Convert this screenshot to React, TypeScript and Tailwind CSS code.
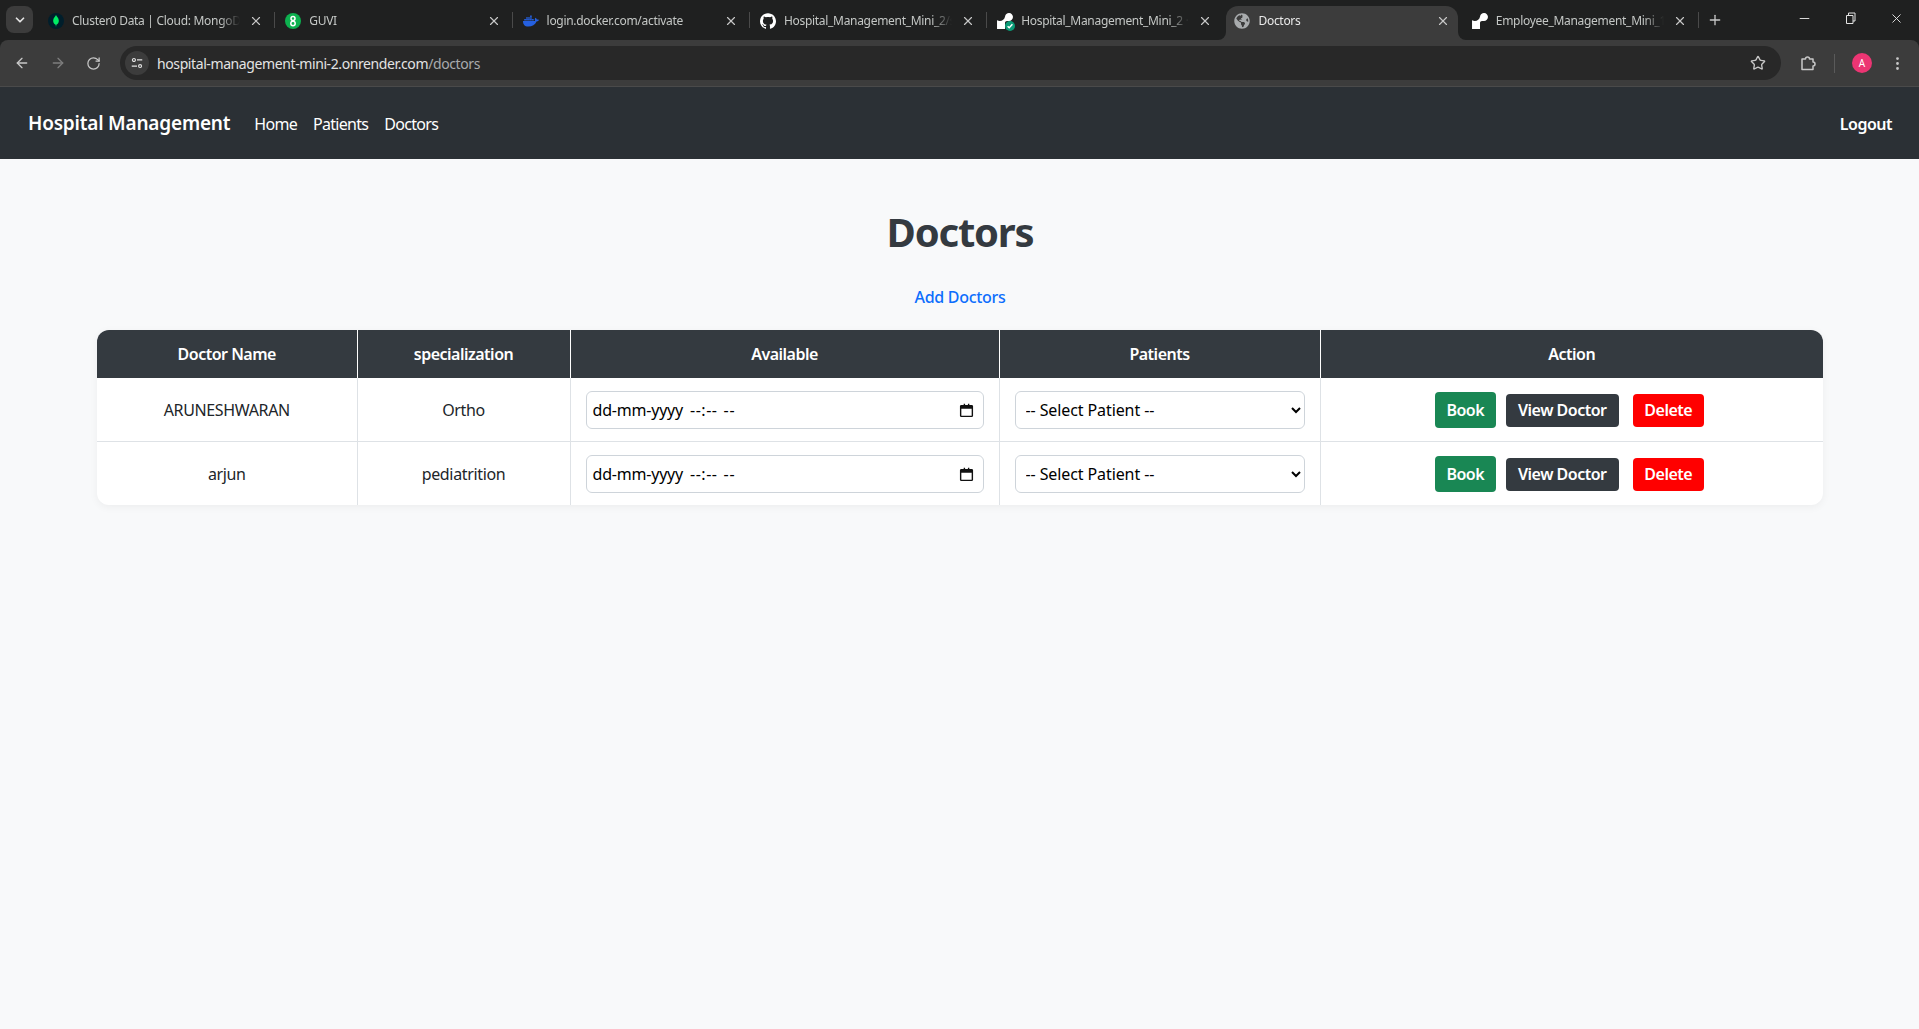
import { ArrowLeft, ArrowRight, ChevronDown, EllipsisVertical, Minus, Plus, RotateCw, Star, X } from 'lucide-react';
import { FaDocker, FaGlobeAmericas } from 'react-icons/fa';
import { SiGithub, SiRender } from 'react-icons/si';
import type { ReactNode } from 'react';

const font = 'font-["Noto_Sans",sans-serif]';

function MongoIcon() {
  return (
    <span className="flex h-4 w-4 items-center justify-center rounded-full bg-[#001e2b]">
      <svg viewBox="0 0 12 16" className="h-3 w-3">
        <path d="M6 0c.4 1.6 3.8 3.700 3.800 7.600 0 3-2 4.800-3.300 5.500L6 16l-.5-2.900C4.200 12.400 2.200 10.600 2.200 7.600 2.200 3.700 5.600 1.600 6 0z" fill="#00ed64" />
      </svg>
    </span>
  );
}

function GuviIcon() {
  return (
    <span className="flex h-4 w-4 items-center justify-center rounded-full bg-[#0db14f]">
      <svg viewBox="0 0 16 16" className="h-4 w-4" fill="none" stroke="#fff" strokeWidth="1.500">
        <circle cx="8" cy="5.500" r="2" />
        <circle cx="8" cy="10.500" r="2.200" />
      </svg>
    </span>
  );
}

function RenderCheckIcon() {
  return (
    <span className="relative block h-4 w-4">
      <SiRender className="h-4 w-4 text-white" />
      <span className="absolute -right-0.5 -bottom-0.5 flex h-2.5 w-2.5 items-center justify-center rounded-full bg-[#0b9a76]">
        <svg viewBox="0 0 10 10" className="h-2 w-2" fill="none" stroke="#fff" strokeWidth="1.800">
          <path d="M2 5.200l2 2 4-4.400" />
        </svg>
      </span>
    </span>
  );
}

const tabs: { title: string; icon: ReactNode; active?: boolean }[] = [
  { title: 'Cluster0 Data | Cloud: MongoDB Cloud', icon: <MongoIcon /> },
  { title: 'GUVI', icon: <GuviIcon /> },
  { title: 'login.docker.com/activate', icon: <FaDocker className="h-4 w-4 text-[#2560e0]" /> },
  { title: 'Hospital_Management_Mini_2/server', icon: <SiGithub className="h-4 w-4 text-white" /> },
  { title: 'Hospital_Management_Mini_2 · Render', icon: <RenderCheckIcon /> },
  { title: 'Doctors', icon: <FaGlobeAmericas className="h-4 w-4 text-[#a8abad]" />, active: true },
  { title: 'Employee_Management_Mini_1 · Render', icon: <SiRender className="h-4 w-4 text-white" /> },
];

const doctors = [
  { name: 'ARUNESHWARAN', specialization: 'Ortho' },
  { name: 'arjun', specialization: 'pediatrition' },
];

function BrowserChrome() {
  return (
    <div className="bg-[#1f2020]">
      <div className="flex h-[40px] items-start pl-[6px]">
        <button className="mt-[6px] mr-[5px] flex h-[27px] w-[27px] items-center justify-center rounded-lg bg-[#3c3c3c] text-[#e3e3e3]">
          <ChevronDown size={14} strokeWidth={3} />
        </button>
        {tabs.map((tab, i) => (
          <div key={tab.title} className="relative mt-[6px] flex h-[34px] w-[237.3px] shrink-0 items-start pt-[7px] pr-[12px] pl-[10px]">
            {tab.active && (
              <div className="absolute inset-y-0 right-[4px] left-[2px] rounded-t-xl bg-[#3c3c3c]">
                <span className="absolute bottom-0 -left-2 h-2 w-2 bg-[#3c3c3c]">
                  <span className="block h-2 w-2 rounded-br-lg bg-[#1f2020]" />
                </span>
                <span className="absolute -right-2 bottom-0 h-2 w-2 bg-[#3c3c3c]">
                  <span className="block h-2 w-2 rounded-bl-lg bg-[#1f2020]" />
                </span>
              </div>
            )}
            <span className="relative flex h-4 w-4 shrink-0 items-center justify-center">{tab.icon}</span>
            <span
              className={`relative ml-2 min-w-0 flex-1 overflow-hidden text-[12px] leading-4 tracking-[-0.3px] whitespace-nowrap [mask-image:linear-gradient(to_right,black_88%,transparent)] ${
                tab.active ? 'text-[#e8e8e8]' : 'text-[#c4c7c5]'
              }`}
            >
              {tab.title}
            </span>
            <X size={14} strokeWidth={2} className="relative mt-px ml-[9px] shrink-0 text-[#c7c7c7]" />
            {i !== 4 && i !== 5 && <span className="absolute top-[6px] right-0 h-[16px] w-px bg-[#4a4a4a]" />}
          </div>
        ))}
        <Plus size={16} strokeWidth={2} className="mt-[12px] ml-[8px] text-[#c7c7c7]" />
        <div className="mt-[11px] ml-auto flex w-[138px] items-start text-[#e3e3e3]">
          <span className="flex w-[46px] justify-center">
            <Minus size={15} strokeWidth={1.500} />
          </span>
          <span className="flex w-[46px] justify-center">
            <svg viewBox="0 0 12 12" className="mt-px h-3 w-3" fill="none" stroke="currentColor">
              <path d="M2.500 3.500h6.500v8h-6.500zM4.500 3.500v-2.500h6.500v8h-2" />
            </svg>
          </span>
          <span className="flex w-[46px] justify-center">
            <X size={15} strokeWidth={1.500} />
          </span>
        </div>
      </div>
      <div className="flex h-[47px] items-start rounded-t-lg border-b border-[#4a4a4a] bg-[#3c3c3c] pt-[6px]">
        <div className="flex h-[34px] w-[120px] shrink-0 items-center text-[#c7c7c7]">
          <ArrowLeft size={16} className="ml-[14px]" />
          <ArrowRight size={16} className="ml-[20px] text-[#7d7d7d]" />
          <RotateCw size={15} className="ml-[20px]" />
        </div>
        <div className="flex h-[34px] flex-1 items-center rounded-full bg-[#282828] pr-[15px] pl-[5px]">
          <span className="flex h-6 w-6 items-center justify-center rounded-full bg-[#3c3c3c] text-[#e3e3e3]">
            <svg viewBox="0 0 16 16" className="h-3.5 w-3.5" fill="none" stroke="currentColor" strokeWidth="1.300">
              <circle cx="4.500" cy="4.500" r="1.700" />
              <path d="M8 4.500h6M2 11.500h6" />
              <circle cx="11.500" cy="11.500" r="1.700" />
            </svg>
          </span>
          <span className="ml-[8px] text-[14px] tracking-[-0.4px] text-[#e3e3e3]">
            hospital-management-mini-2.onrender.com<span className="text-[#a8abad]">/doctors</span>
          </span>
          <Star size={16} strokeWidth={2} className="ml-auto text-[#c7c7c7]" />
        </div>
        <div className="flex h-[34px] w-[138px] shrink-0 items-center text-[#c7c7c7]">
          <svg viewBox="0 0 18 18" className="ml-[18px] h-[18px] w-[18px]" fill="none" stroke="currentColor" strokeWidth="1.500">
            <path d="M3 5h3.500a2 2 0 0 1 4 0H14v3a2 2 0 0 1 0 4v3.500H3z" strokeLinejoin="round" />
          </svg>
          <span className="ml-[17px] h-[19px] w-px bg-[#5a5a5a]" />
          <span className="ml-[17px] flex h-5 w-5 items-center justify-center rounded-full bg-[#ec3573] text-[10px] text-white">A</span>
          <EllipsisVertical size={17} className="ml-[17px]" />
        </div>
      </div>
    </div>
  );
}

function DateField() {
  return (
    <div className="flex h-[38px] items-center rounded-md border border-[#ced4da] bg-white pr-[9px] pl-[6px] text-[16px] tracking-normal text-black">
      <span className="tracking-[-0.2px]">dd-mm-yyyy</span>
      <span className="ml-[7px] tracking-[0.5px]">--:--</span>
      <span className="ml-[6px] tracking-[1px]">--</span>
      <svg viewBox="0 0 16 16" className="ml-auto h-[15px] w-[15px]" fill="#111">
        <path d="M2.500 2H5V.8h1.500V2h3V.8H11V2h2.500A1.500 1.500 0 0 1 15 3.500v10a1.500 1.500 0 0 1-1.500 1.500h-11A1.500 1.500 0 0 1 1 13.500v-10A1.500 1.500 0 0 1 2.500 2zm0 4v7.500h11V6z" />
      </svg>
    </div>
  );
}

export default function App() {
  return (
    <div className={`${font} flex min-h-screen flex-col bg-[#f8f9fa] text-[#212529]`}>
      <BrowserChrome />

      <nav className="flex h-[72px] items-center bg-[#2b3035] pt-[1px] pr-[27px] pl-[28px] text-white">
        <a className="text-[19px] font-semibold tracking-[-0.2px]">Hospital Management</a>
        <div className="ml-[24px] flex gap-[16px] text-[16px] tracking-[-0.7px]">
          <a>Home</a>
          <a>Patients</a>
          <a>Doctors</a>
        </div>
        <a className="ml-auto text-[16px] font-semibold tracking-[-0.5px]">Logout</a>
      </nav>

      <main className="pr-[96px] pl-[97px]">
        <h1 className="mt-[49px] text-center text-[40px] leading-[48px] font-bold tracking-[-1.2px] text-[#343a40]">Doctors</h1>
        <div className="mt-[29px] text-center">
          <a className="text-[16px] font-medium tracking-[-0.3px] text-[#0d6efd]">Add Doctors</a>
        </div>

        <div className="mt-[21px] overflow-hidden rounded-xl bg-white shadow-[0_2px_8px_rgba(0,0,0,0.05)]">
          <table className="w-full table-fixed border-collapse text-[16px] tracking-[-0.35px]">
            <thead>
              <tr className="h-[48px] bg-[#343a40] text-white">
                <th className="w-[260px] border-r border-white font-semibold tracking-[-0.5px]">Doctor Name</th>
                <th className="w-[213px] border-r border-white font-semibold tracking-[-0.5px]">specialization</th>
                <th className="w-[429px] border-r border-white font-semibold tracking-[-0.5px]">Available</th>
                <th className="w-[321px] border-r border-white font-semibold tracking-[-0.5px]">Patients</th>
                <th className="font-semibold tracking-[-0.5px]">Action</th>
              </tr>
            </thead>
            <tbody>
              {doctors.map((doctor, i) => (
                <tr key={doctor.name} className={`[&>td]:pt-[2px] ${i === 0 ? 'h-[63px] border-b border-[#dee2e6]' : 'h-[64px]'}`}>
                  <td className="border-r border-[#dee2e6] text-center">{doctor.name}</td>
                  <td className="border-r border-[#dee2e6] text-center">{doctor.specialization}</td>
                  <td className="border-r border-[#dee2e6] px-[15px]">
                    <DateField />
                  </td>
                  <td className="border-r border-[#dee2e6] px-[15px]">
                    <select className="h-[38px] w-full rounded-md border border-[#ced4da] bg-white pr-[2px] pl-[6px] text-[16px] tracking-[-0.1px] text-black">
                      <option>-- Select Patient --</option>
                    </select>
                  </td>
                  <td>
                    <div className="flex items-center justify-center pr-[5px] font-semibold tracking-[-0.5px] text-white">
                      <button className="h-[36px] w-[61px] rounded bg-[#198754]">Book</button>
                      <button className="ml-[10px] h-[33px] w-[113px] rounded bg-[#343a40]">View Doctor</button>
                      <button className="ml-[14px] h-[33px] w-[71px] rounded bg-[#ff0000]">Delete</button>
                    </div>
                  </td>
                </tr>
              ))}
            </tbody>
          </table>
        </div>
      </main>
    </div>
  );
}
